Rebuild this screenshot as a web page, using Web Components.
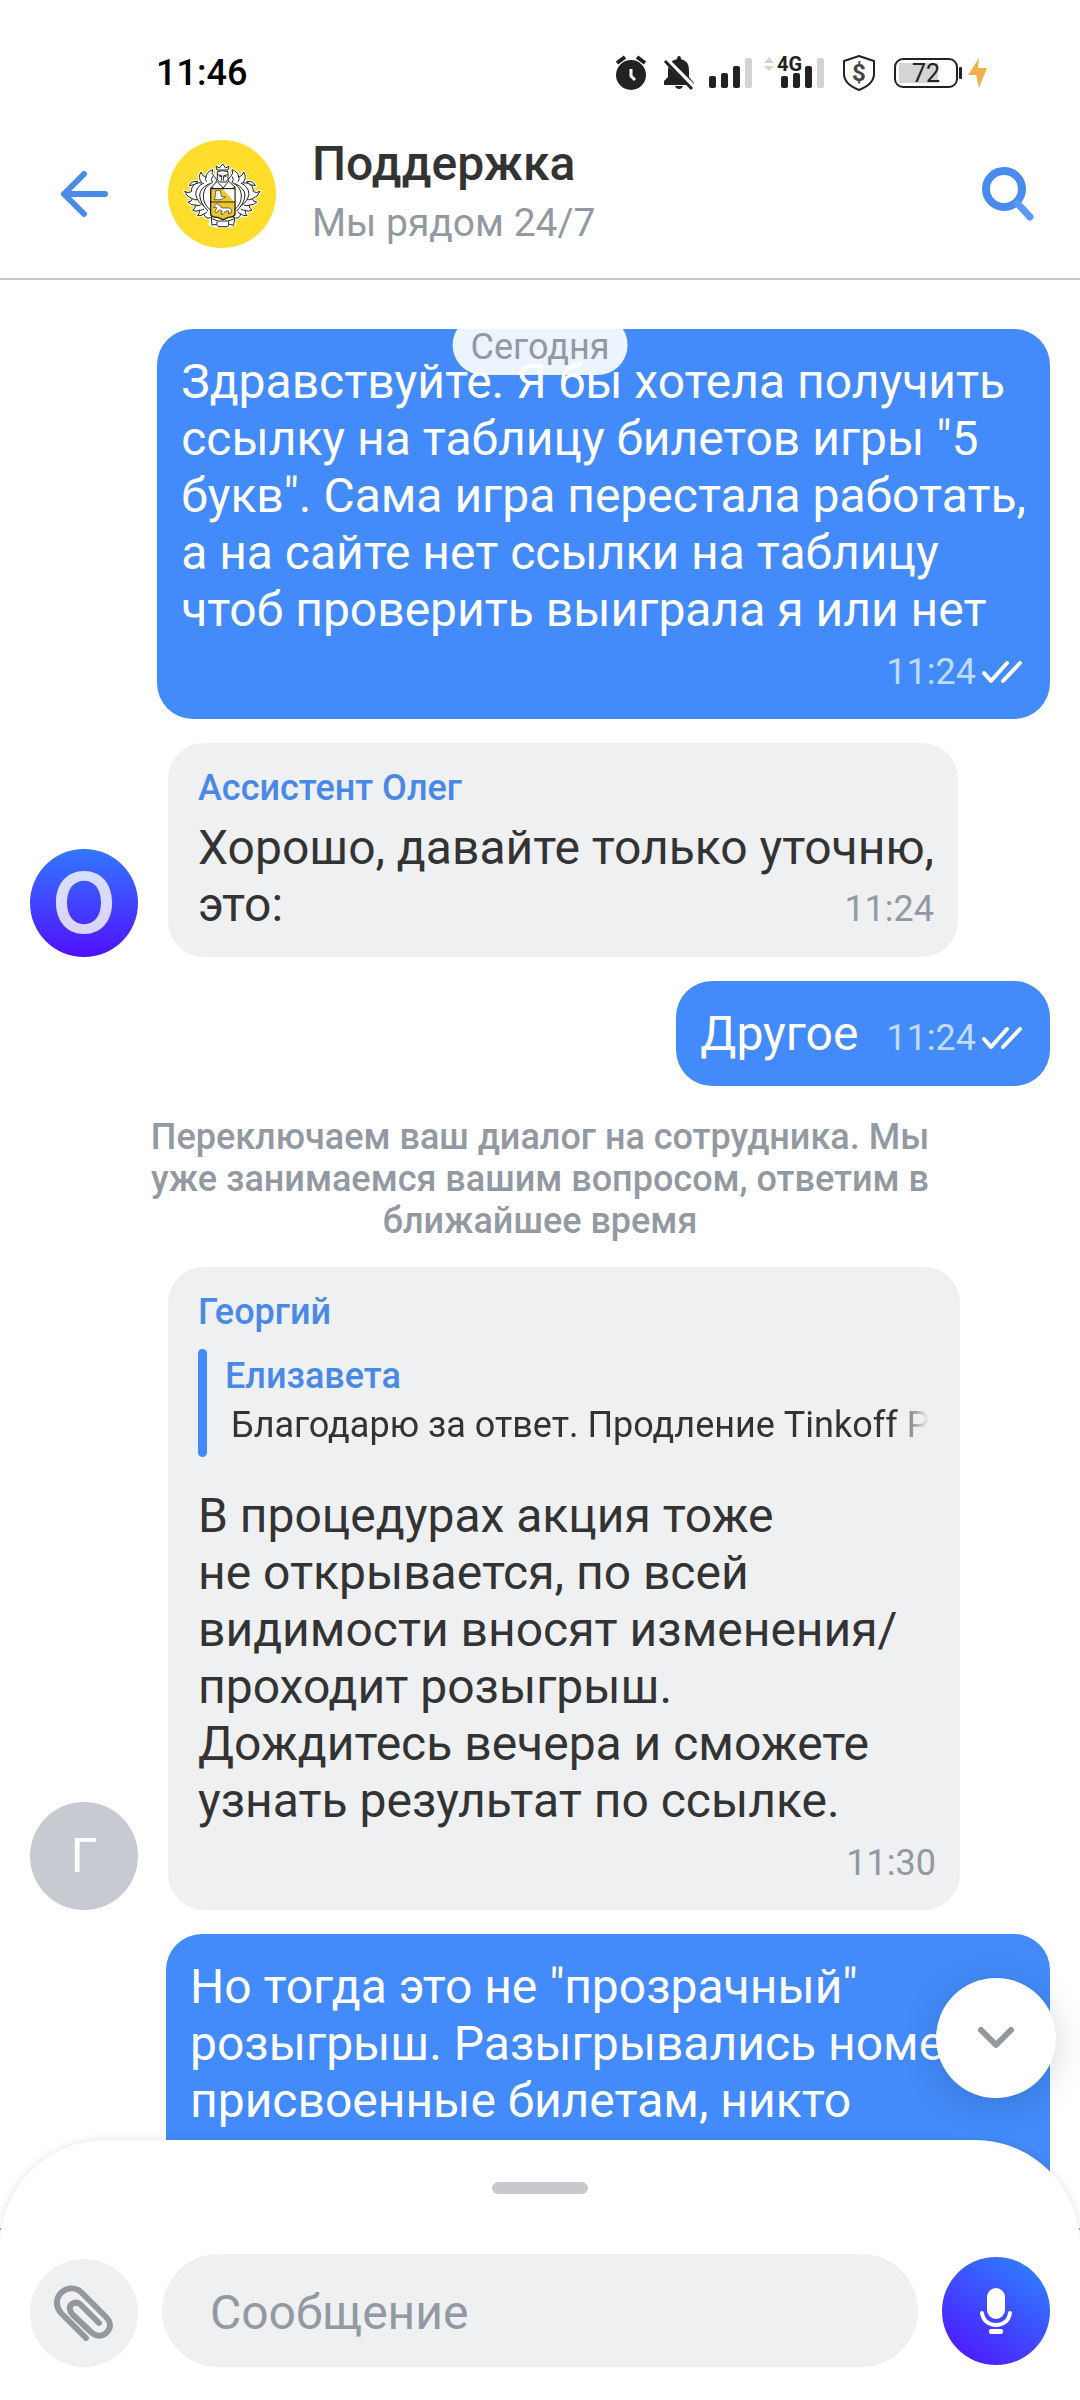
<!DOCTYPE html>
<html lang="ru">
<head>
<meta charset="utf-8">
<meta name="viewport" content="width=device-width, initial-scale=1">
<title>Поддержка</title>
<style>
  :root {
    --color-accent: #438bfa;
    --color-name: #4a88e8;
    --color-text: #333333;
    --color-muted: #9299a2;
    --color-surface: #eef0f2;
    --color-line: #c4c4c4;
    --edge: 30px;
    --gap: 24px;
    --text-lg: 48px;
    --text-md: 39px;
    --text-sm: 36px;
  }

  body {
    margin: 0;
    background: #fff;
    color: var(--color-text);
    font-family: Roboto, "Liberation Sans", sans-serif;
  }

  .long {
    --bubble-width: 836px;
  }
</style>
</head>
<body>
<support-chat>
  <status-bar slot="top" time="11:46" battery="72"></status-bar>
  <chat-header slot="top">
    <span slot="title">Поддержка</span>
    <span slot="subtitle">Мы рядом 24/7</span>
  </chat-header>

  <chat-message out time="11:24">Здравствуйте. Я бы хотела получить<br>ссылку на таблицу билетов игры "5<br>букв". Сама игра перестала работать,<br>а на сайте нет ссылки на таблицу<br>чтоб проверить выиграла я или нет</chat-message>

  <chat-message inline time="11:24">
    <user-avatar slot="avatar" kind="bot">O</user-avatar>
    <span slot="name">Ассистент Олег</span>Хорошо, давайте только уточню,<br>это:</chat-message>

  <chat-message out inline time="11:24">Другое</chat-message>

  <system-note>Переключаем ваш диалог на сотрудника. Мы уже занимаемся вашим вопросом, ответим в ближайшее время</system-note>

  <chat-message time="11:30">
    <user-avatar slot="avatar">Г</user-avatar>
    <span slot="name">Георгий</span>
    <quoted-message slot="quote" author="Елизавета">Благодарю за ответ. Продление Tinkoff Pro</quoted-message>В процедурах акция тоже<br>не открывается, по всей<br>видимости вносят изменения/<br>проходит розыгрыш.<br>Дождитесь вечера и сможете<br>узнать результат по ссылке.</chat-message>

  <chat-message class="long" out time="11:31">Но тогда это не "прозрачный"<br>розыгрыш. Разыгрывались номера,<br>присвоенные билетам, никто</chat-message>

  <message-composer slot="bottom"></message-composer>
</support-chat>

<script>
class SupportChat extends HTMLElement {
    constructor() {
        super();
        this.attachShadow({ mode: 'open' });

        this.shadowRoot.innerHTML = `
    <style>
      :host {
        display: flex;
        flex-direction: column;
        height: 100vh;
        overflow: hidden;
      }

      .log {
        position: relative;
        flex: 1;
        min-height: 0;
        display: flex;
        flex-direction: column;
        gap: var(--gap);
        padding: 49px var(--edge) 0;
      }

      .log ::slotted(*) {
        flex: none;
      }

      .day {
        position: absolute;
        z-index: 1;
        top: 35px;
        left: 50%;
        transform: translateX(-50%);
        padding: 4px 18px 0;
        border-radius: 30px;
        background: rgba(255, 255, 255, .9);
        color: var(--color-muted);
        font-size: var(--text-sm);
        line-height: 56px;
      }

      .down {
        position: absolute;
        z-index: 1;
        right: 24px;
        bottom: 130px;
        display: grid;
        place-items: center;
        width: 120px;
        height: 120px;
        padding: 0;
        border: 0;
        border-radius: 50%;
        background: #fff;
        box-shadow: 0 6px 36px rgba(0, 0, 0, .16);
      }
    </style>

    <slot name="top"></slot>
    <main class="log">
      <time class="day">Сегодня</time>
      <slot></slot>
      <button class="down" aria-label="Вниз">
        <svg width="36" height="22" viewBox="0 0 36 22" fill="none" stroke="#93979e" stroke-width="6" stroke-linecap="round" stroke-linejoin="round"><path d="M3 3l15 15L33 3"/></svg>
      </button>
    </main>
    <slot name="bottom"></slot>
  `;
    }
}

class StatusBar extends HTMLElement {
    constructor() {
        super();
        this.attachShadow({ mode: 'open' });
    }

    connectedCallback() {
        this.shadowRoot.innerHTML = `
    <style>
      :host {
        display: flex;
        justify-content: space-between;
        align-items: center;
        height: 112px;
        padding: 33px 90px 0 156px;
        box-sizing: border-box;
        color: #000;
        font-size: var(--text-sm);
        font-weight: 500;
      }

      .icons {
        display: flex;
        align-items: center;
        gap: 12px;
        color: #222;
      }

      .power {
        display: flex;
        align-items: center;
        gap: 6px;
      }

      .battery {
        position: relative;
        box-sizing: border-box;
        width: 64px;
        height: 30px;
        border: 2px solid #222;
        border-radius: 9px;
        background: linear-gradient(#d4d4d4, #d4d4d4) 3px 3px / 39px 20px no-repeat;
        font-size: 25px;
        font-weight: 400;
        line-height: 27px;
        text-align: center;
      }

      .battery::after {
        content: "";
        position: absolute;
        right: -6px;
        top: 7px;
        width: 3px;
        height: 12px;
        border-radius: 1px;
        background: #222;
      }
    </style>

    <time>${this.getAttribute('time')}</time>
    <div class="icons">
      <svg width="34" height="36" viewBox="0 0 34 36">
        <circle cx="16" cy="20" r="15" fill="#222"/>
        <path d="M2 8l8-6M30 8l-8-6" stroke="#222" stroke-width="4"/>
        <path d="M16 14v7l4 4" fill="none" stroke="#fff" stroke-width="3"/>
      </svg>
      <svg width="36" height="36" viewBox="-3 0 36 36">
        <path d="M15 1q2 0 2 3 8 2 8 11v7l5 6v2H0v-4l4-4v-7Q4 6 13 4q0-3 2-3zM11 31h8q-1 3-4 3t-4-3z" fill="#222"/>
        <path d="M0 3l30 30" stroke="#fff" stroke-width="6"/>
        <path d="M1 6l27 28" stroke="#222" stroke-width="3"/>
      </svg>
      <svg width="43" height="32" viewBox="0 0 43 32" fill="#222">
        <rect y="19" width="7" height="12" rx="2"/><rect x="12" y="16" width="7" height="15" rx="2"/><rect x="24" y="9" width="7" height="22" rx="2"/><rect x="36" y="1" width="7" height="30" rx="2" fill="#d4d4d4"/>
      </svg>
      <svg width="60" height="48" viewBox="0 -6 60 48" fill="#222">
        <path d="M0 8l5-6 5 6zM0 11h10l-5 5z" fill="#d4d4d4"/>
        <rect x="17" y="21" width="7" height="12" rx="2"/><rect x="29" y="18" width="7" height="15" rx="2"/><rect x="41" y="11" width="7" height="22" rx="2"/><rect x="53" y="3" width="7" height="30" rx="2" fill="#d4d4d4"/>
        <text x="13" y="16" font-size="20" font-weight="700">4G</text>
      </svg>
      <svg width="46" height="36" viewBox="-6 0 46 36">
        <path d="M17 1l15 5v13q0 10-15 16Q2 29 2 19V6z" fill="none" stroke="#222" stroke-width="2"/>
        <text x="17" y="26" text-anchor="middle" font-size="24" font-weight="700" fill="#444">$</text>
      </svg>
      <div class="power">
        <div class="battery">${this.getAttribute('battery')}</div>
        <svg width="26" height="32" viewBox="-4 0 26 32"><path d="M11 1L0 18h8l3 13 8-20h-9z" fill="#efb04d"/></svg>
      </div>
    </div>
  `;
    }
}

class ChatHeader extends HTMLElement {
    constructor() {
        super();
        this.attachShadow({ mode: 'open' });

        this.shadowRoot.innerHTML = `
    <style>
      :host {
        display: flex;
        align-items: center;
        height: 168px;
        padding: 0 45px 2px 60px;
        box-sizing: border-box;
        border-bottom: 2px solid var(--color-line);
      }

      button {
        padding: 0;
        border: 0;
        background: none;
      }

      svg {
        display: block;
      }

      .brand {
        margin: 0 36px 0 60px;
      }

      .titles {
        flex: 1;
      }

      h1, p {
        margin: 0;
      }

      h1 {
        font-size: var(--text-lg);
        font-weight: 500;
        line-height: 56px;
      }

      p {
        margin-top: 2px;
        color: var(--color-muted);
        font-size: var(--text-md);
        line-height: 58px;
      }
    </style>

    <button aria-label="Назад">
      <svg width="48" height="48" viewBox="0 0 48 48" fill="none" stroke="#4a8bea" stroke-width="6" stroke-linecap="round" stroke-linejoin="round"><path d="M45 24H4M24 4L4 24l20 20"/></svg>
    </button>
    <svg class="brand" width="108" height="108" viewBox="-42 -61 324 324" aria-hidden="true">
      <circle cx="120" cy="101" r="162" fill="#ffdd2d"/>
      <defs>
        <g id="mantle">
          <path d="M90 170Q72 180 65 161Q58 168 47 166Q54 160 52 150Q42 156 32 149Q42 144 40 134Q28 136 18 125Q30 124 31 115Q14 110 8 93Q18 100 28 94Q28 76 42 70Q50 66 60 68Q46 52 57 35Q60 48 72 50Q74 34 92 28Q86 40 96 48Q108 56 102 68L86 84z"/>
          <path d="M22 76Q28 60 48 64Q38 76 22 76z"/>
          <path d="M92 48Q84 58 92 66Q66 78 64 104T86 150M82 70Q54 84 53 104Q54 128 78 152M66 68Q42 78 41 102M41 102Q46 124 64 136M31 115Q38 120 46 118M40 134Q48 138 56 134M52 150Q60 150 66 146M65 161Q72 160 75 154M72 50Q68 58 74 64" fill="none"/>
        </g>
      </defs>
      <g fill="#fff" stroke="#fff" stroke-width="9" stroke-linejoin="round">
        <use href="#mantle"/>
        <use href="#mantle" transform="matrix(-1 0 0 1 242 0)"/>
        <path d="M104 28l-1-10 9 3 9-8 10 8 9-3-2 10zM104 32h36v44h-36zM88 174l14 4h40l14-4 2 18-18 6h-40l-16-6z"/>
      </g>
      <g fill="#fff" stroke="#222" stroke-width="3" stroke-linejoin="round">
        <use href="#mantle"/>
        <use href="#mantle" transform="matrix(-1 0 0 1 242 0)"/>
        <path d="M105 29l-3-12 10 6 10-12 9 12 10-6-3 12z"/>
        <path d="M106 34q16-6 32 0v23l-6 8h-19l-7-8z"/>
        <path d="M107 43l12 3v15M137 43l-12 3v15M112 48h6M127 48h6" fill="none"/>
        <path d="M105 63L88 81l11 4h50l11-4-20-18-17 20z"/>
        <path d="M86 85h73v75c0 7-8 10-19 11l-17 7-16-7c-13 0-21-4-21-11z" fill="#ecc62f" stroke-width="4"/>
        <path d="M123 87h34v37z" stroke="none"/>
        <path d="M86 125h73"/>
        <path d="M101 91v15l-5 12h21l13-8-12-2-3-17z" stroke-width="2"/>
        <path d="M96 138l8-8 9 5 7 8h19c10 0 9 6 8 15l-7 3-1-10-9 2-7 9-6-1 4-9-9-3-10 9-4-4 6-9-2-5-6 2z" stroke-width="2"/>
        <path d="M88 174l19 8h31l20-7-3 20-13-3-5 7h-28l-6-7-13 2zM106 183l-2 11M139 183l2 11"/>
      </g>
    </svg>
    <div class="titles">
      <h1><slot name="title"></slot></h1>
      <p><slot name="subtitle"></slot></p>
    </div>
    <button aria-label="Поиск">
      <svg width="54" height="56" viewBox="0 0 54 56" fill="none" stroke="#4a8bf0"><circle cx="23" cy="23" r="18" stroke-width="8"/><path d="M36 37l13 14" stroke="#5b98f5" stroke-width="7" stroke-linecap="round"/></svg>
    </button>
  `;
    }
}

class UserAvatar extends HTMLElement {
    constructor() {
        super();
        this.attachShadow({ mode: 'open' });

        this.shadowRoot.innerHTML = `
    <style>
      :host {
        display: grid;
        place-items: center;
        width: 108px;
        height: 108px;
        border-radius: 50%;
        background: #c7cad0;
        color: #fff;
        font-size: var(--text-lg);
        line-height: 1;
      }

      :host([kind="bot"]) {
        background: linear-gradient(#3377ff, #5010ff);
        color: rgba(255, 255, 255, .8);
        font-family: Inter, sans-serif;
        font-size: 84px;
        font-weight: 600;
      }
    </style>

    <slot></slot>
  `;
    }
}

class QuotedMessage extends HTMLElement {
    constructor() {
        super();
        this.attachShadow({ mode: 'open' });
    }

    connectedCallback() {
        this.shadowRoot.innerHTML = `
    <style>
      :host {
        display: flex;
        gap: 18px;
        height: 108px;
        margin: 6px 0 30px;
        font-size: var(--text-sm);
        line-height: 42px;
      }

      .bar {
        flex: none;
        width: 9px;
        border-radius: 5px;
        background: var(--color-accent);
      }

      .body {
        display: flex;
        flex-direction: column;
        gap: 7px;
        padding-top: 6px;
      }

      .author {
        color: var(--color-name);
        font-weight: 500;
      }

      .preview {
        width: 711px;
        padding-left: 6px;
        box-sizing: border-box;
        overflow: hidden;
        white-space: nowrap;
        -webkit-mask-image: linear-gradient(90deg, #000 94%, transparent 99%);
        mask-image: linear-gradient(90deg, #000 94%, transparent 99%);
      }
    </style>

    <div class="bar"></div>
    <div class="body">
      <div class="author">${this.getAttribute('author')}</div>
      <div class="preview"><slot></slot></div>
    </div>
  `;
    }
}

class ChatMessage extends HTMLElement {
    constructor() {
        super();
        this.attachShadow({ mode: 'open' });
    }

    connectedCallback() {
        const ticks = this.hasAttribute('out')
            ? '<svg width="40" height="23" viewBox="0 0 40 23" fill="none" stroke="#fff" stroke-width="4" stroke-linecap="round" stroke-linejoin="round"><path d="M2 12l7 8L25 2M21 20L38 2"/></svg>'
            : '';

        this.shadowRoot.innerHTML = `
    <style>
      :host {
        display: flex;
        align-items: flex-end;
        gap: var(--edge);
      }

      :host([out]) {
        justify-content: flex-end;
      }

      .bubble {
        min-width: var(--bubble-width, 0);
        padding: 24px 24px 24px 30px;
        border-radius: 36px;
        background: var(--color-surface);
      }

      :host([out]) .bubble {
        padding-left: 24px;
        background: var(--color-accent);
        color: #fff;
      }

      .name {
        color: var(--color-name);
        font-size: var(--text-sm);
        font-weight: 500;
        line-height: 42px;
      }

      .text {
        display: flow-root;
        font-size: var(--text-lg);
        line-height: 57px;
      }

      .name + .text {
        margin-top: 10px;
      }

      .meta {
        display: flex;
        justify-content: flex-end;
        align-items: center;
        gap: 6px;
        margin-top: 12px;
        color: var(--color-muted);
        font-size: var(--text-sm);
        line-height: 45px;
      }

      :host([out]) .meta {
        padding-right: 4px;
        color: #bfdcfd;
      }

      :host([inline]) .meta {
        float: right;
        margin: 11px 0 0 28px;
        height: 45px;
      }
    </style>

    <slot name="avatar"></slot>
    <article class="bubble">
      ${this.hasAttribute('out') ? '' : '<div class="name"><slot name="name"></slot></div>'}
      <div class="text"><slot name="quote"></slot><slot></slot><span class="meta"><time>${this.getAttribute('time')}</time>${ticks}</span></div>
    </article>
  `;
    }
}

class SystemNote extends HTMLElement {
    constructor() {
        super();
        this.attachShadow({ mode: 'open' });

        this.shadowRoot.innerHTML = `
    <style>
      :host {
        display: block;
        align-self: center;
        max-width: 800px;
        padding: 6px 0 1px;
        color: var(--color-muted);
        font-size: var(--text-sm);
        font-weight: 500;
        line-height: 42px;
        text-align: center;
      }
    </style>

    <slot></slot>
  `;
    }
}

class MessageComposer extends HTMLElement {
    constructor() {
        super();
        this.attachShadow({ mode: 'open' });

        this.shadowRoot.innerHTML = `
    <style>
      :host {
        position: relative;
        z-index: 2;
        display: block;
        border-top: 2px solid #b4b4b4;
        background: #fff;
      }

      /* the sheet rises over the end of the log */
      .sheet {
        position: absolute;
        inset: -90px 0 0;
        display: flex;
        justify-content: center;
        align-items: flex-start;
        padding-top: 42px;
        border-radius: 105px 105px 0 0;
        background: #fff;
        box-shadow: 0 0 9px rgba(0, 0, 0, .12);
      }

      form {
        position: relative;
        display: flex;
        align-items: center;
        gap: var(--gap);
        padding: 24px var(--edge) 33px;
      }

      button {
        display: grid;
        place-items: center;
        flex: none;
        width: 108px;
        height: 108px;
        padding: 0;
        border: 0;
        border-radius: 50%;
        background: var(--color-surface);
      }

      .attach {
        align-self: flex-end;
      }

      .mic {
        background: linear-gradient(215deg, #2f7bff 12%, #4e1cff 88%);
      }

      .handle {
        width: 96px;
        height: 12px;
        border-radius: 6px;
        background: #c7c9cd;
      }

      input {
        flex: 1;
        min-width: 0;
        height: 113px;
        padding: 3px 48px 0;
        box-sizing: border-box;
        border: 0;
        border-radius: 57px;
        background: var(--color-surface);
        color: var(--color-text);
        font: inherit;
        font-size: var(--text-lg);
      }

      input::placeholder {
        color: var(--color-muted);
        opacity: 1;
      }
    </style>

    <div class="sheet"><button class="handle" aria-label="Развернуть"></button></div>
    <form>
      <button class="attach" type="button" aria-label="Прикрепить файл">
        <svg width="60" height="56" viewBox="0 0 60 56" fill="none" stroke="#93979e" stroke-width="6" stroke-linecap="round" stroke-linejoin="round"><path d="M32 53L7 28C1 21 2 12 8 7c6-5 14-5 20 1l24 24c5 5 5 11 1 15-4 5-11 5-16 0L18 29c-3-4-3-8 0-10s6-2 9 1l18 18"/></svg>
      </button>
      <input type="text" aria-label="Сообщение" placeholder="Сообщение">
      <button class="mic" type="button" aria-label="Голосовое сообщение">
        <svg width="34" height="48" viewBox="0 0 34 48" fill="#fff"><rect x="8" y="1" width="18" height="31" rx="9"/><path d="M3 26c2 16 26 16 28 0" fill="none" stroke="#fff" stroke-width="4" stroke-linecap="round"/><rect x="10" y="42" width="14" height="5" rx="2"/></svg>
      </button>
    </form>
  `;
    }
}

customElements.define('status-bar', StatusBar);
customElements.define('chat-header', ChatHeader);
customElements.define('user-avatar', UserAvatar);
customElements.define('quoted-message', QuotedMessage);
customElements.define('chat-message', ChatMessage);
customElements.define('system-note', SystemNote);
customElements.define('message-composer', MessageComposer);
customElements.define('support-chat', SupportChat);
</script>
</body>
</html>
